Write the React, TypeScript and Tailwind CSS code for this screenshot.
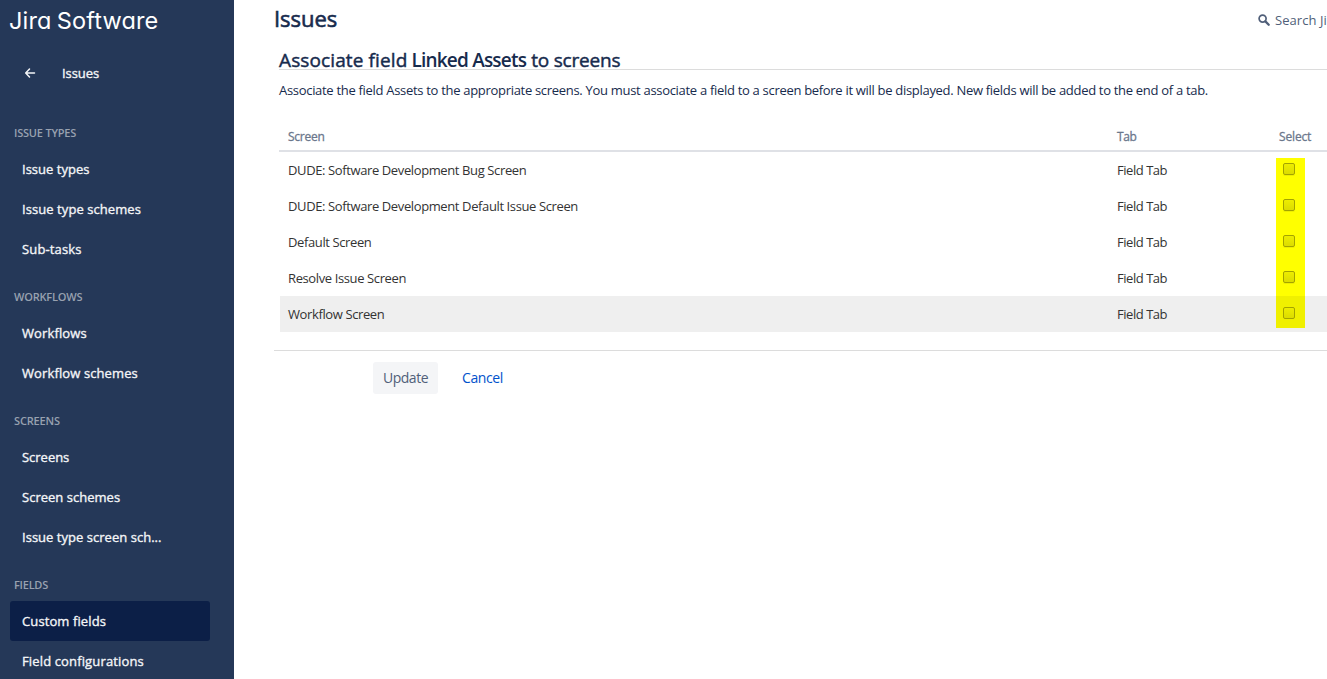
type NavItem = { label: string; tracking: string; active?: boolean };
type NavGroup = { title: string; tracking: string; items: NavItem[] };

const groups: NavGroup[] = [
  {
    title: "ISSUE TYPES",
    tracking: "tracking-[-0.2px]",
    items: [
      { label: "Issue types", tracking: "tracking-[0.02px]" },
      { label: "Issue type schemes", tracking: "tracking-[0.07px]" },
      { label: "Sub-tasks", tracking: "tracking-[0.15px]" },
    ],
  },
  {
    title: "WORKFLOWS",
    tracking: "tracking-[-0.2px]",
    items: [
      { label: "Workflows", tracking: "tracking-[0.12px]" },
      { label: "Workflow schemes", tracking: "tracking-[0.11px]" },
    ],
  },
  {
    title: "SCREENS",
    tracking: "tracking-[-0.14px]",
    items: [
      { label: "Screens", tracking: "tracking-[-0.02px]" },
      { label: "Screen schemes", tracking: "tracking-[0.02px]" },
      { label: "Issue type screen sch...", tracking: "tracking-[0.03px]" },
    ],
  },
  {
    title: "FIELDS",
    tracking: "tracking-[-0.24px]",
    items: [
      { label: "Custom fields", tracking: "tracking-[0.11px]", active: true },
      { label: "Field configurations", tracking: "tracking-[0.14px]" },
    ],
  },
];

const rows = [
  "DUDE: Software Development Bug Screen",
  "DUDE: Software Development Default Issue Screen",
  "Default Screen",
  "Resolve Issue Screen",
  "Workflow Screen",
];

function Sidebar() {
  return (
    <aside className="flex h-full w-[234px] shrink-0 flex-col overflow-hidden bg-[#253858] text-[#f4f5f7]">
      <div className="flex h-10 shrink-0 items-center pt-px pl-[9px] font-['Inter'] text-[23.5px] leading-none tracking-[0.15px] text-white [font-feature-settings:'cv11'] [word-spacing:-1.5px]">
        Jira Software
      </div>
      <div className="flex h-[65px] shrink-0 items-center pl-6">
        <svg className="mt-px" width="12" height="12" viewBox="0 0 12 12" fill="none" stroke="currentColor" strokeWidth="1.5" strokeLinecap="round" strokeLinejoin="round" aria-hidden="true">
          <path d="M10.5 6H2M5.5 2L1.7 6l3.8 4" />
        </svg>
        <span className="ml-[26px] pt-[3px] text-[13px] tracking-[-0.05px] [-webkit-text-stroke:0.35px_currentColor]">Issues</span>
      </div>
      <nav className="flex flex-col">
        {groups.map((g) => (
          <section key={g.title} className="shrink-0 pt-5">
            <h3 className={`mb-2 flex h-4 items-center pl-3.5 text-[11px] font-semibold text-[#98a1b0] ${g.tracking}`}>{g.title}</h3>
            <ul>
              {g.items.map((it) => (
                <li
                  key={it.label}
                  className={`mx-2.5 flex h-10 w-[200px] items-center rounded-[3px] pt-0.5 pl-3 text-[13px] whitespace-nowrap [-webkit-text-stroke:0.35px_currentColor] ${it.tracking} ${it.active ? "bg-[#0c1f47]" : ""}`}
                >
                  {it.label}
                </li>
              ))}
            </ul>
          </section>
        ))}
      </nav>
    </aside>
  );
}

function Checkbox() {
  return (
    <span
      role="checkbox"
      aria-checked="false"
      className="block size-3 rounded-[2px] border border-[#a3a300] bg-linear-to-b from-[#eded00] to-[#dcdc00] shadow-[0_1px_0_#eeee00]"
    />
  );
}

function ScreensTable() {
  return (
    <div className="ml-[5px] text-[13px] tracking-[-0.385px] text-[#333]">
      <div className="flex h-[30px] items-center border-b-2 border-[#dfe1e6] pt-0.5 text-[12px] text-[#6b778c] [-webkit-text-stroke:0.3px_currentColor]">
        <span className="w-[829px] pl-[9px] tracking-[-0.25px]">Screen</span>
        <span className="w-[162px] pl-[9px] tracking-[-0.4px]">Tab</span>
        <span className="pl-[9px] tracking-[-0.15px]">Select</span>
      </div>
      {rows.map((name, i) => {
        const last = i === rows.length - 1;
        return (
          <div key={name} className={`ml-px flex h-9 items-center ${last ? "bg-[#efefef]" : ""}`}>
            <span className="w-[829px] pt-0.5 pl-2">{name}</span>
            <span className="w-[167px] pt-0.5 pl-2 tracking-[-0.46px]">Field Tab</span>
            <span
              className={`flex w-[29px] justify-center pr-[3px] ${
                last
                  ? "h-8 items-start self-start bg-[#f0f000] pt-[11px]"
                  : i === 0
                    ? "h-[30px] items-start self-end bg-[#ffff00] pt-[5px]"
                    : "h-9 items-start bg-[#ffff00] pt-[11px]"
              }`}
            >
              <Checkbox />
            </span>
          </div>
        );
      })}
    </div>
  );
}

export default function App() {
  return (
    <div className="flex h-[679px] w-[1327px] overflow-hidden bg-white font-['Open_Sans','Noto_Sans',sans-serif]">
      <Sidebar />
      <main className="min-w-0 flex-1 overflow-hidden pl-10 whitespace-nowrap">
        <header className="flex h-10 items-center justify-between">
          <h1 className="pb-[5px] text-[22px] leading-none tracking-[-0.05px] text-[#172b4d] [-webkit-text-stroke:0.6px_currentColor]">Issues</h1>
          <div className="flex w-[69px] shrink-0 items-center overflow-hidden text-[13px] text-[#505f79]">
            <svg className="mr-[5px] shrink-0" width="12" height="12" viewBox="0 0 12 12" fill="none" stroke="currentColor" aria-hidden="true">
              <circle cx="4.6" cy="4.6" r="3.5" strokeWidth="1.7" />
              <path d="M7.4 7.4l3.3 3.3" strokeWidth="2.3" strokeLinecap="round" />
            </svg>
            <span className="pt-0.5 tracking-[0.05px]">Search Ji</span>
          </div>
        </header>
        <h2 className="ml-[5px] flex h-[30px] items-end border-b border-[#dcdcdc] text-[19px] leading-[19px] text-[#172b4d]">
          <span className="-mb-px [-webkit-text-stroke:0.45px_currentColor]">
            <span className="tracking-[0.12px]">Associate field</span>
            <span className="ml-1 font-semibold tracking-[-0.8px] [-webkit-text-stroke:0px]">Linked Assets</span>
            <span className="ml-[5px] tracking-[-0.2px]">to screens</span>
          </span>
        </h2>
        <p className="mt-2.5 ml-[5px] h-5 text-[13px] leading-5 tracking-[-0.303px] text-[#172b4d]">
          Associate the field Assets to the appropriate screens. You must associate a field to a screen before it will be displayed. New fields will be added to the end of a tab.
        </p>
        <div className="mt-[22px]">
          <ScreensTable />
        </div>
        <div className="mt-[18px] flex border-t border-[#dcdcdc] pt-[11px] pl-[99px] text-[14px]">
          <button type="button" className="h-8 w-[65px] rounded-[3px] bg-[#f4f5f7] pb-0.5 tracking-[-0.47px] text-[#505f79]">Update</button>
          <a className="ml-6 leading-8 tracking-[-0.38px] text-[#0052cc]">Cancel</a>
        </div>
      </main>
    </div>
  );
}
